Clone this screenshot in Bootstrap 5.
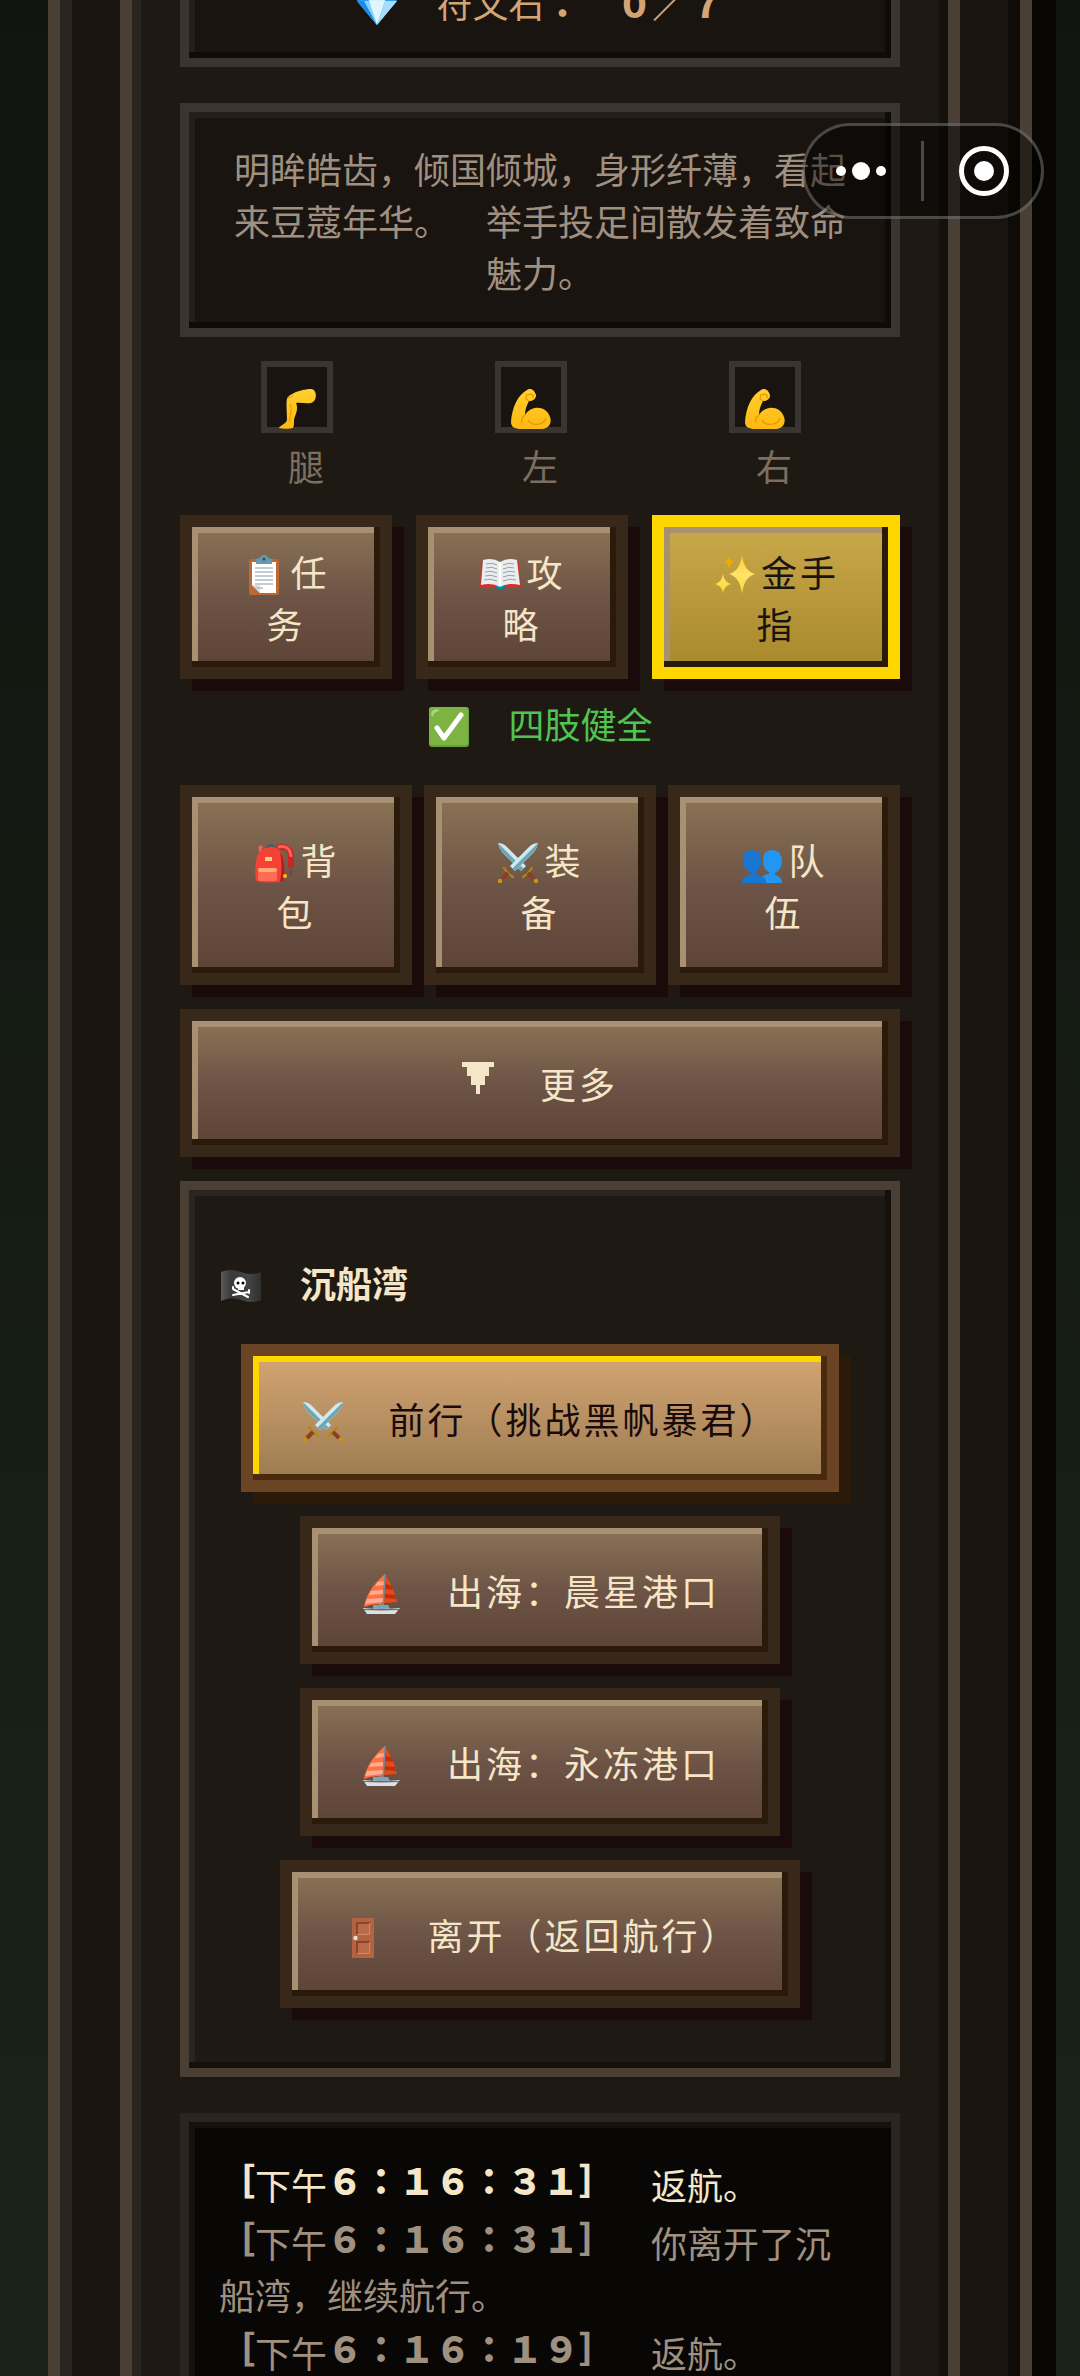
<!DOCTYPE html>
<html lang="zh-CN">
<head>
<meta charset="utf-8">
<meta name="viewport" content="width=device-width, initial-scale=1">
<title>沉船湾</title>
<link rel="stylesheet" href="https://cdn.jsdelivr.net/npm/bootstrap@5.3.0/dist/css/bootstrap.min.css">
<style>
:root{--cream:#f5e6c8;--edge:#4a3f35;--edge-dim:#3a3530;--ink:#1e1913}
body{font-family:"Noto Sans CJK SC","Noto Sans",sans-serif;font-size:36px;line-height:52px;color:var(--cream);background:linear-gradient(#10150f,#1b2319);font-feature-settings:"fwid";text-spacing-trim:space-all}
.game{height:100vh;padding:0 48px}
.frame-outer{height:100%;border:solid var(--edge);border-width:0 12px;background:#1a1410;padding:0 48px;box-shadow:inset 12px 0 #2a2520,inset -12px 0 #0f0b07,24px 0 #080704}
.frame-outer{padding:0 60px}
.frame-inner{height:100%;border:solid var(--edge);border-width:0 12px;background:var(--ink);padding:0 48px;box-shadow:inset 9px 0 #2a241e,inset -9px 0 #14110b}
.frame-inner>*{flex:none}
.panel{border:9px solid var(--edge-dim);padding:30px;background:#1a1410;box-shadow:inset -6px -6px #0f0b07,inset 6px 6px #241f1a}
.panel-tail{height:67px;border-top:0;padding-top:0;color:#d4a574;box-shadow:inset -6px -6px #0f0b07,inset 6px 0 #241f1a}
.desc{color:#a09080;margin-top:36px}
.limbs{margin:24px 9px;color:#7d6e60}
.limb-box{width:72px;height:72px;border:6px solid var(--edge-dim);background:#1a1410;margin:0 18px 6px 0}
.limb-box svg{margin:0 0 -2px}
.emo{width:45px;height:40px;vertical-align:-8px}
.heavy{font-weight:900}
.pix{border:12px solid #38281a;border-radius:0;background:linear-gradient(#8b7355,#6d5446 50%,#5c4335) padding-box;color:var(--cream);padding:36px 48px;font:inherit;letter-spacing:3px;box-shadow:inset -6px -6px #2a1a0a,inset 6px 6px #a89072,12px 12px #1a0a0a}
.pix svg{margin-right:3px}
.pix-short{padding:18px 36px;flex:1 1 212px}
.pix-gold{flex-basis:248px;border-color:#ffd700;background:linear-gradient(#c9a84a,#a8892b) padding-box;color:#1a1410}
.pix-main{border-color:#6b4423;background:linear-gradient(#d4a574,#9b7b50) padding-box;color:#1a0a0a;box-shadow:inset -6px -6px #4a2a0e,inset 6px 6px #ffd700,12px 12px #2a1a0a}
.row-tools{gap:24px}
.row-bag{gap:12px;margin-bottom:24px}
.status{color:#50c450;margin:18px 0 36px}
.scene{border-color:var(--edge);background:var(--ink);margin-top:24px;box-shadow:inset -6px -6px #14110b,inset 6px 6px #2a2520}
.scene h1{font-size:36px;line-height:52px;font-weight:700;margin:36px 0}
.actions{gap:24px;margin-bottom:30px}
.log{border-color:#2a2520;background:#080705;padding-top:36px;margin-top:36px;color:#a09080;box-shadow:inset 6px 6px #15120e}
.log li{margin-bottom:6px}
.log .fresh{color:var(--cream)}
.log .heavy{vertical-align:5px;line-height:1}
.capsule{top:123px;right:36px;width:242px;height:96px;border:3px solid rgba(255,255,255,.25);border-radius:48px;background:rgba(0,0,0,.45)}
.capsule svg{display:block}
</style>
<script src="https://cdn.jsdelivr.net/npm/bootstrap@5.3.0/dist/js/bootstrap.bundle.min.js"></script>
</head>
<body class="overflow-hidden">
<svg width="0" height="0" class="position-absolute" aria-hidden="true">
<defs>
<linearGradient id="skin" x2="0" y2="1"><stop stop-color="#ffd02e"/><stop offset="1" stop-color="#ffb812"/></linearGradient>
<linearGradient id="flagG"><stop stop-color="#5b5b5b"/><stop offset=".25" stop-color="#3a3a3a"/><stop offset=".7" stop-color="#444"/><stop offset="1" stop-color="#2f2f2f"/></linearGradient>
<linearGradient id="starG" x2="0" y2="1"><stop stop-color="#ffc928"/><stop offset=".5" stop-color="#ffe36a"/><stop offset="1" stop-color="#fdd835"/></linearGradient>
<symbol id="gem" viewBox="-2 0 45 40"><path fill="#2b9df4" d="M8 4h24l8 11-20 24L0 15z"/><path fill="#b3e5fc" d="M8 4l4 11h16l4-11z"/><path fill="#81d4fa" d="M0 15h12l8 24z"/><path fill="#1e88e5" d="M0 15l20 24L7 15z"/><path fill="#e1f5fe" d="M12 15h16l-8 24z"/><path fill="#a6defa" d="M28 15h12L20 39z"/><path fill="#d4f1fd" d="M20 4l-8 11h16z"/></symbol>
<symbol id="leg" viewBox="-2 0 45 40"><path fill="url(#skin)" d="M10 9C16 2 29 0 34 0c6 0 7 12 0 14-5 1-10-1-15 0 3 6-1 12-2 17 0 4 0 6-1 8-4 1-10 1-14 0 0-2 7-4 8-8 0-7-1-16 0-22z"/><path fill="none" stroke="#e59600" d="M13 15c3 6-1 12 0 18M10 10c2-2 5-2 6-3"/></symbol>
<symbol id="arm" viewBox="-2 0 45 40"><path fill="url(#skin)" d="M0 33C1 18 7 6 16 1c4-3 8 1 9 5 0 4-3 6-7 6-2 4-4 8-4 14 5-8 14-9 20-5 8 6 8 18-3 19H10C4 40 0 38 0 33z"/><path fill="none" stroke="#e59600" stroke-width="1.2" d="M14 26c-3 2-4 5-3 8M17 31c4 7 16 5 18-2M17 6c3-2 6 0 5 3M16 5l-1 5 3 2"/></symbol>
<symbol id="clip" viewBox="-2 0 45 40"><rect x="5" y="4" width="30" height="36" rx="2" fill="#b96a35"/><path fill="#fff" d="M8 7h24v31H16l-8-8z"/><path fill="#d6e0e8" d="M8 30l8 8V30z"/><path stroke="#b0bec5" stroke-width="1.3" d="M11 13h18M11 17h18M11 21h18M11 25h18M11 29h18M11 33h8"/><path fill="#6799af" d="M12 9V5q0-2 4-2 1-3 4-3t4 3q4 0 4 2v4z"/><circle cx="20" cy="4" r="1.5" fill="#31505e"/></symbol>
<symbol id="book" viewBox="-2 0 45 40"><path fill="#d32f2f" d="M1 7h38l2 26H0z"/><path fill="#0288a7" d="M15 31h11l-3 3h-5z"/><path fill="#e9edf0" d="M3 5q10-3 17 2 8-5 17-2l3 25q-12-3-20 2Q12 27 1 30z"/><path stroke="#fff" stroke-width="2" d="M20 7v24"/><path fill="none" stroke="#9e9e9e" d="M6 9q6-2 11 1M6 13q6-2 11 1M5 17q6-2 12 1M5 21q6-2 12 1M4 25q7-2 13 1M23 10q6-3 11-1M23 14q6-3 11-1M23 18q6-3 12-1M23 22q6-3 12-1M23 26q7-3 13-1"/></symbol>
<symbol id="spark" viewBox="-2 0 45 40"><path fill="url(#starG)" d="M27 0q2 16 13 19-11 3-13 20-2-17-13-20Q25 16 27 0zM8 19q1 8 8 10-7 2-8 9-1-7-8-9 7-2 8-10z"/><path fill="#f4a800" d="M14 1q1 5 5 6-4 1-5 7-1-6-5-7 4-1 5-6z"/></symbol>
<symbol id="check" viewBox="-2 0 45 40"><rect width="40" height="40" rx="3" fill="#689f38"/><rect width="39" height="38" rx="3" fill="#7cb342"/><path fill="#aed581" d="M2 8q0-6 7-6l1 2q-6 1-6 6z"/><path fill="none" stroke="#fff" stroke-width="5" stroke-linecap="round" stroke-linejoin="round" d="M8 21l7 10L32 8"/></symbol>
<symbol id="pack" viewBox="-2 0 45 40"><path fill="none" stroke="#455a64" stroke-width="2" d="M13 5q3-6 8 0"/><path fill="none" stroke="#c62828" stroke-width="6" d="M23 5q14-4 14 10v10"/><path fill="none" stroke="#ff5f52" stroke-width="3" d="M8 5q-3-4-1 6M24 4q12-3 13 10"/><path fill="#f44336" d="M3 14Q6 4 17 4t12 12q2 12 1 22-13 3-28 0Q0 24 3 14z"/><path fill="#b71c1c" d="M26 8q6 10 4 30l-4 1q3-14 0-31z"/><rect x="11" y="14" width="7" height="4" fill="#ffcc80"/><rect x="4" y="27" width="19" height="11" rx="2" fill="#ff6b55"/><rect x="4" y="25" width="19" height="4" rx="2" fill="#ffab73"/><path stroke="#6d4c41" stroke-width="3" d="M37 27v6"/><circle cx="31" cy="33" r="2" fill="#fdc30b"/></symbol>
<symbol id="blade" viewBox="0 0 40 40"><path fill="#cfe9ee" d="M0 0q5 0 9 4l19 19-5 5L4 9Q1 5 0 0z"/><path fill="#6fa6b5" d="M0 0l25.500 25.500L23 28 4 9Q1 5 0 0z"/><path stroke="#b8860b" stroke-width="2.200" stroke-linecap="round" d="M34 25q-4 6-9 9"/><path stroke="#8d3f26" stroke-width="4" d="M30 30l6 6"/><circle cx="38" cy="38" r="2.200" fill="#c8930e"/></symbol>
<symbol id="swords" viewBox="-2 0 45 40"><use href="#blade" width="40" height="40"/><use href="#blade" width="40" height="40" transform="matrix(-1 0 0 1 40 0)"/></symbol>
<symbol id="team" viewBox="-2 0 45 40"><path fill="#1976d2" d="M0 40q0-7 6-7l4-3q-9-3-9-13Q1 7 10 7t9 10q0 10-6 13l4 3q7 0 7 7z"/><path fill="#2196f3" d="M20 33l8-3q-7-3-7-13 0-10 9-10t10 10q0 10-7 13v2q7 1 7 8H24q0-5-4-7z"/></symbol>
<symbol id="pirate" viewBox="-2 0 45 40"><path fill="url(#flagG)" d="M0 6q9-4 20 0t20 0v28q-10 4-20 0t-20 1z"/><path stroke="#fff" stroke-width="2" stroke-linecap="round" d="M12 23l15 8M12 29l16-3M12 21v2M28 24v3"/><circle cx="19" cy="17" r="6" fill="#fff"/><rect x="17" y="20" width="6" height="4" fill="#fff"/><circle cx="17" cy="17" r="1.500"/><circle cx="22" cy="17" r="1.500"/></symbol>
<symbol id="boat" viewBox="-2 0 45 40"><path fill="#ff7043" d="M23 0Q5 15 2 33q9-4 18-2z"/><path fill="#ffab91" d="M16 8l6-1v4l-9 1zM9 17l12-1v4L7 21zM5 25l16-1v4L3 30z"/><path fill="#e64a19" d="M24 2q8 12 11 26l-13 1z"/><path fill="#bf2f0c" d="M24 10l6 2 1 4-8-1zM23 20l10 1 1 4-11-1z"/><path stroke="#78909c" stroke-width="1.500" d="M23 0l-2 34"/><path fill="#78a5bd" d="M11 31h15l2 4H11z"/><path fill="#cfe7ea" d="M1 34q18 2 37 0l-5 6H5z"/><path stroke="#b84a32" d="M2 35.500q17 1 35 0"/></symbol>
<symbol id="door" viewBox="-2 0 45 40"><path fill="#b2633f" d="M10 0h22v40H10z"/><path fill="#8b4528" d="M14 4h14v13H14zM14 23h14v13H14z"/><path fill="#b86b47" d="M16 6h11v10H16zM16 25h11v10H16z"/><path fill="none" stroke="#d28a68" d="M15 16.500h12.500V5M15 35.500h12.500V24"/><circle cx="13.500" cy="20" r="2.200" fill="#e0e0e0"/></symbol>
</defs>
</svg>

<main class="game overflow-hidden">
 <div class="frame-outer">
  <div class="frame-inner d-flex flex-column">

   <section class="panel panel-tail overflow-hidden d-flex align-items-end justify-content-center">
    <div class="text-nowrap"><svg class="emo"><use href="#gem"/></svg>&#12288;符文石<span class="heavy">:</span>&#12288;<span class="heavy">0/7</span></div>
   </section>

   <p class="panel desc text-center mb-0">明眸皓齿，倾国倾城，身形纤薄，看起来豆蔻年华。&#12288;举手投足间散发着致命魅力。</p>

   <section class="limbs d-flex text-center">
    <div class="flex-fill d-flex flex-column align-items-center"><div class="limb-box d-flex align-items-end justify-content-center"><svg class="emo"><use href="#leg"/></svg></div>腿</div>
    <div class="flex-fill d-flex flex-column align-items-center"><div class="limb-box d-flex align-items-end justify-content-center"><svg class="emo"><use href="#arm"/></svg></div>左</div>
    <div class="flex-fill d-flex flex-column align-items-center"><div class="limb-box d-flex align-items-end justify-content-center"><svg class="emo"><use href="#arm"/></svg></div>右</div>
   </section>

   <div class="row-tools d-flex">
    <button type="button" class="btn pix pix-short"><svg class="emo"><use href="#clip"/></svg>任务</button>
    <button type="button" class="btn pix pix-short"><svg class="emo"><use href="#book"/></svg>攻略</button>
    <button type="button" class="btn pix pix-short pix-gold"><svg class="emo"><use href="#spark"/></svg>金手指</button>
   </div>

   <div class="status text-center"><svg class="emo"><use href="#check"/></svg>&#12288;四肢健全</div>

   <div class="row-bag d-flex">
    <button type="button" class="btn pix w-100"><svg class="emo"><use href="#pack"/></svg>背包</button>
    <button type="button" class="btn pix w-100"><svg class="emo"><use href="#swords"/></svg>装备</button>
    <button type="button" class="btn pix w-100"><svg class="emo"><use href="#team"/></svg>队伍</button>
   </div>

   <button type="button" class="btn pix w-100"><svg class="align-top" width="36" height="41" viewBox="0 -5 36 41" aria-hidden="true"><path fill="#f5e6c8" d="M0 0h32v5h-5v9h-4v9h-5v9h-4v-9H9v-9H5V5H0z"/></svg>&#12288;更多</button>

   <section class="panel scene">
    <h1><svg class="emo"><use href="#pirate"/></svg>&#12288;沉船湾</h1>
    <div class="actions d-flex flex-column align-items-center">
     <button type="button" class="btn pix pix-main"><svg class="emo"><use href="#swords"/></svg>&#12288;前行（挑战黑帆暴君）</button>
     <button type="button" class="btn pix"><svg class="emo"><use href="#boat"/></svg>&#12288;出海：晨星港口</button>
     <button type="button" class="btn pix"><svg class="emo"><use href="#boat"/></svg>&#12288;出海：永冻港口</button>
     <button type="button" class="btn pix"><svg class="emo"><use href="#door"/></svg>&#12288;离开（返回航行）</button>
    </div>
   </section>

   <section class="panel log">
    <ul class="list-unstyled mb-0">
     <li class="fresh"><span class="heavy">[</span>下午<span class="heavy">6:16:31]</span>&#12288;返航。</li>
     <li><span class="heavy">[</span>下午<span class="heavy">6:16:31]</span>&#12288;你离开了沉船湾，继续航行。</li>
     <li><span class="heavy">[</span>下午<span class="heavy">6:16:19]</span>&#12288;返航。</li>
    </ul>
   </section>
  </div>
 </div>
</main>

<div class="capsule position-fixed">
 <svg width="236" height="90" viewBox="0 0 236 90" fill="#fff" role="img" aria-label="菜单"><circle cx="36" cy="45" r="5"/><circle cx="56" cy="45" r="9"/><circle cx="76" cy="45" r="5"/><path fill-opacity=".25" d="M116 15h3v60h-3z"/><circle cx="179" cy="45" r="10"/><circle cx="179" cy="45" r="22.500" fill="none" stroke="#fff" stroke-width="5"/></svg>
</div>
</body>
</html>
